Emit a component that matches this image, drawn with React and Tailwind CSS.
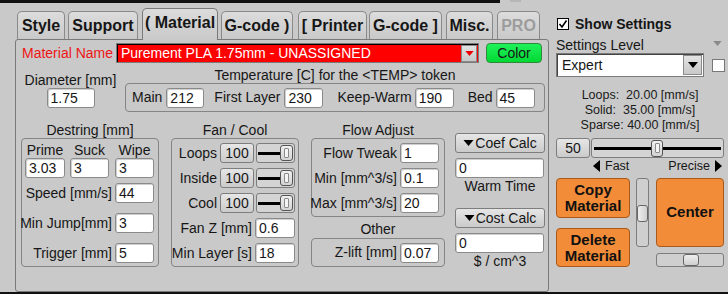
import React from "react";

const tabs = [
  { t: "Style", c: "ml-[17px] w-[48px]" },
  { t: "Support", c: "ml-[3px] w-[70px]" },
  { t: "( Material", c: "ml-[4px] w-[76px]", active: true },
  { t: "G-code )", c: "ml-[3px] w-[72px]" },
  { t: "[ Printer", c: "ml-[5px] w-[69px]" },
  { t: "G-code ]", c: "ml-[2px] w-[73px]" },
  { t: "Misc.", c: "ml-[4px] w-[47px]" },
  { t: "PRO", c: "ml-[4px] w-[43px]", off: true },
];

function Field({ v, c = "w-[39px]" }) {
  return (
    <div
      className={`${c} h-[20px] shrink-0 bg-white border border-[#8a8a8a] rounded-[3px] pl-[3px] flex items-center leading-none shadow-[inset_1px_1px_0_#cfcfcf]`}
    >
      {v}
    </div>
  );
}

function GrayBtn({ children, c }) {
  return (
    <div
      className={`${c} shrink-0 bg-linear-to-b from-[#e6e6e6] to-[#cbcbcb] border border-[#7d7d7d] rounded-[3px] flex items-center justify-center leading-none`}
    >
      {children}
    </div>
  );
}

function Thumb({ c = "w-[13px] h-[16px]" }) {
  return (
    <div className={`${c} shrink-0 border border-[#555] rounded-[3px] bg-linear-to-b from-[#f0f0f0] to-[#d4d4d4] flex items-center justify-center`}>
      <div className="w-[5px] h-[10px] border border-[#8a8a8a] rounded-[1px] bg-[#f4f4f4]" />
    </div>
  );
}

function MiniSlider() {
  return (
    <div className="w-[39px] h-[20px] shrink-0 border border-[#7d7d7d] rounded-[3px] bg-[#d4d4d4] flex items-center pl-[1px] pr-[1px]">
      <div className="flex-1 h-[3px] bg-black" />
      <Thumb />
    </div>
  );
}

function DownTri({ color = "#000", w = 11, h = 6 }) {
  return (
    <svg width={w} height={h} viewBox="0 0 10 6">
      <polygon points="0,0 10,0 5,6" fill={color} />
    </svg>
  );
}

function Row({ label, children, c = "" }) {
  return (
    <div className={`h-[20px] flex items-center justify-end ${c}`}>
      <span className="mr-[3px] whitespace-nowrap">{label}</span>
      {children}
    </div>
  );
}

export default function App() {
  return (
    <div className="w-[728px] h-[294px] bg-[#c9c9c9] flex flex-col overflow-hidden text-[14px] text-[#161616] font-['Liberation_Sans',Arial,sans-serif]">
      <div className="h-[3px] flex shrink-0">
        <div className="w-[500px] bg-[#111]" />
        <div className="ml-[10px] w-[11px] h-[2px] bg-[#b6b6b6]" />
      </div>

      <div className="flex h-[289px]">
        {/* left side: tabs + material panel */}
        <div className="w-[552px] flex flex-col">
          <div className="h-[36px] flex items-end">
            {tabs.map((tab) =>
              tab.active ? (
                <div
                  key={tab.t}
                  className={`${tab.c} h-[32px] -mb-px relative z-10 bg-linear-to-b from-[#dcdcdc] to-[#c9c9c9] border border-b-0 border-[#7a7a7a] rounded-t-[5px] flex items-center justify-center font-bold text-[16px] pb-[3px]`}
                >
                  {tab.t}
                </div>
              ) : (
                <div
                  key={tab.t}
                  className={`${tab.c} h-[28px] pt-[1px] bg-linear-to-b from-[#dcdcdc] to-[#c9c9c9] border border-b-0 border-[#8a8a8a] rounded-t-[5px] flex items-center justify-center font-bold text-[16px] ${
                    tab.off ? "text-[#9c9c9c]" : ""
                  }`}
                >
                  {tab.t}
                </div>
              )
            )}
          </div>

          <div className="ml-[15px] w-[534px] h-[253px] border border-[#7a7a7a] rounded-[3px] pl-[5px] pt-[3px]">
            {/* material name */}
            <div className="h-[20px] flex items-center">
              <span className="ml-[1px] w-[94px] text-[#ee1515]">Material Name</span>
              <div className="w-[363px] h-[20px] border border-[#7a7a7a] bg-[#ff0000] shadow-[inset_1px_1px_0_#000] flex items-center">
                <span className="flex-1 pl-[4px] text-white whitespace-nowrap">Purement PLA 1.75mm - UNASSIGNED</span>
                <div className="w-[16px] h-[17px] mr-[1px] bg-linear-to-b from-[#e2e2e2] to-[#c8c8c8] border border-[#8a8a8a] flex items-center justify-center">
                  <DownTri color="#ee0000" w={9} h={5} />
                </div>
              </div>
              <div className="ml-[7px] w-[56px] h-[20px] bg-linear-to-b from-[#1df25a] to-[#00d832] border border-[#2e8a3a] rounded-[4px] flex items-center justify-center leading-none">
                Color
              </div>
            </div>

            {/* diameter + temperature */}
            <div className="mt-[5px] flex">
              <div className="w-[99px] flex flex-col items-center pt-[4px]">
                <div className="h-[16px] leading-[16px]">Diameter [mm]</div>
                <Field v="1.75" c="w-[48px]" />
              </div>
              <div className="ml-[5px] w-[420px]">
                <div className="h-[15px] leading-[15px] text-center">Temperature [C] for the &lt;TEMP&gt; token</div>
                <div className="h-[29px] border border-[#858585] rounded-[4px] flex items-center pl-[6px]">
                  <span>Main</span>
                  <div className="ml-[4px]"><Field v="212" c="w-[38px]" /></div>
                  <span className="ml-[10px]">First Layer</span>
                  <div className="ml-[4px]"><Field v="230" /></div>
                  <span className="ml-[14px]">Keep-Warm</span>
                  <div className="ml-[3px]"><Field v="190" /></div>
                  <span className="ml-[14px]">Bed</span>
                  <div className="ml-[3px]"><Field v="45" /></div>
                </div>
              </div>
            </div>

            {/* lower groups */}
            <div className="mt-[10px] flex">
              {/* destring */}
              <div className="w-[138px]">
                <div className="h-[16px] leading-[16px] text-center">Destring [mm]</div>
                <div className="h-[129px] border border-[#858585] rounded-[4px]">
                  <div className="mt-[3px] pl-[3px] flex">
                    <div className="w-[40px] flex flex-col items-center">
                      <div className="h-[16px] leading-[16px]">Prime</div>
                      <Field v="3.03" c="w-[40px]" />
                    </div>
                    <div className="ml-[5px] w-[39px] flex flex-col items-center">
                      <div className="h-[16px] leading-[16px]">Suck</div>
                      <Field v="3" />
                    </div>
                    <div className="ml-[6px] w-[39px] flex flex-col items-center">
                      <div className="h-[16px] leading-[16px]">Wipe</div>
                      <Field v="3" />
                    </div>
                  </div>
                  <div className="pr-[4px]">
                    <Row label="Speed [mm/s]" c="mt-[5px]"><Field v="44" /></Row>
                    <Row label="Min Jump[mm]" c="mt-[10px]"><Field v="3" /></Row>
                    <Row label="Trigger [mm]" c="mt-[10px]"><Field v="5" /></Row>
                  </div>
                </div>
              </div>

              {/* fan / cool */}
              <div className="ml-[12px] w-[128px]">
                <div className="h-[16px] leading-[16px] text-center">Fan / Cool</div>
                <div className="h-[129px] border border-[#858585] rounded-[4px] pt-[4px] pr-[3px] flex flex-col gap-[5px]">
                  {["Loops", "Inside", "Cool"].map((l) => (
                    <Row key={l} label={l}>
                      <GrayBtn c="w-[34px] h-[20px]">100</GrayBtn>
                      <div className="ml-[2px]"><MiniSlider /></div>
                    </Row>
                  ))}
                  <Row label="Fan Z [mm]"><Field v="0.6" c="w-[40px]" /></Row>
                  <Row label="Min Layer [s]"><Field v="18" c="w-[40px]" /></Row>
                </div>
              </div>

              {/* flow adjust + other */}
              <div className="ml-[12px] w-[134px]">
                <div className="h-[16px] leading-[16px] text-center">Flow Adjust</div>
                <div className="h-[79px] border border-[#858585] rounded-[4px] pt-[4px] pr-[5px] flex flex-col gap-[5px]">
                  <Row label="Flow Tweak"><Field v="1" /></Row>
                  <Row label="Min [mm^3/s]"><Field v="0.1" /></Row>
                  <Row label="Max [mm^3/s]"><Field v="20" /></Row>
                </div>
                <div className="h-[21px] pt-[4px] leading-[16px] text-center">Other</div>
                <div className="h-[29px] border border-[#858585] rounded-[4px] pr-[5px] flex items-center justify-end">
                  <span className="mr-[3px]">Z-lift [mm]</span>
                  <Field v="0.07" />
                </div>
              </div>

              {/* calcs */}
              <div className="ml-[10px] w-[90px] pt-[11px] flex flex-col">
                <GrayBtn c="w-[90px] h-[20px] gap-[1px]">
                  <DownTri />
                  <span>Coef Calc</span>
                </GrayBtn>
                <div className="mt-[5px]"><Field v="0" c="w-[89px]" /></div>
                <div className="h-[16px] leading-[16px] text-center">Warm Time</div>
                <div className="mt-[14px]">
                  <GrayBtn c="w-[90px] h-[20px] gap-[1px]">
                    <DownTri />
                    <span>Cost Calc</span>
                  </GrayBtn>
                </div>
                <div className="mt-[5px]"><Field v="0" c="w-[89px]" /></div>
                <div className="h-[16px] leading-[16px] text-center">$ / cm^3</div>
              </div>
            </div>
          </div>
        </div>

        {/* right sidebar */}
        <div className="flex-1 pl-[4px] flex flex-col">
          <div className="mt-[13px] h-[16px] flex items-center">
            <div className="ml-[1px] w-[12px] h-[12px] bg-white border border-black flex items-center justify-center">
              <svg width="10" height="10" viewBox="0 0 10 10">
                <polyline points="1.5,5 4,8 8.5,1.5" fill="none" stroke="#000" strokeWidth="1.6" />
              </svg>
            </div>
            <span className="ml-[6px] font-bold">Show Settings</span>
          </div>
          <div className="mt-[5px] h-[16px] flex items-start">
            <span className="leading-[16px]">Settings Level</span>
            <div className="ml-auto mr-[5px] mt-[4px]">
              <DownTri color="#8a8a8a" w={11} h={5} />
            </div>
          </div>
          <div className="h-[24px] flex items-center">
            <div className="w-[148px] h-[24px] bg-white border border-[#7a7a7a] shadow-[inset_1px_1px_0_#444] flex items-center">
              <span className="flex-1 pl-[5px]">Expert</span>
              <div className="w-[19px] h-[20px] mr-[1px] bg-linear-to-b from-[#e4e4e4] to-[#c8c8c8] border border-[#8a8a8a] flex items-center justify-center">
                <DownTri w={10} h={6} />
              </div>
            </div>
            <div className="ml-[8px] w-[13px] h-[13px] bg-white border border-[#777]" />
          </div>
          <div className="mt-[11px] pr-[4px] text-[12.5px] leading-[15px] text-center text-[#1a1a1a]">
            <div className="whitespace-pre">Loops:  20.00 [mm/s]</div>
            <div className="whitespace-pre">Solid:  35.00 [mm/s]</div>
            <div className="whitespace-pre">Sparse: 40.00 [mm/s]</div>
          </div>
          <div className="mt-[5px] h-[20px] flex">
            <GrayBtn c="w-[34px] h-[20px]">50</GrayBtn>
            <div className="ml-[1px] w-[133px] h-[20px] border border-[#7d7d7d] rounded-[3px] bg-[#d4d4d4] flex items-center px-[2px]">
              <div className="w-[57px] h-[3px] bg-black" />
              <Thumb c="w-[12px] h-[17px]" />
              <div className="flex-1 h-[3px] bg-black" />
            </div>
          </div>
          <div className="h-[16px] w-[168px] pl-[37px] pr-[2px] flex items-center justify-between text-[12.5px]">
            <div className="flex items-center">
              <svg width="7" height="12" viewBox="0 0 7 12"><polygon points="7,0 7,12 0,6" fill="#000" /></svg>
              <span className="ml-[5px]">Fast</span>
            </div>
            <div className="flex items-center">
              <span className="mr-[5px]">Precise</span>
              <svg width="7" height="12" viewBox="0 0 7 12"><polygon points="0,0 0,12 7,6" fill="#000" /></svg>
            </div>
          </div>
          <div className="mt-[4px] flex">
            <div className="w-[74px] flex flex-col">
              <div className="h-[40px] bg-[#f28c38] border border-[#a85a1c] rounded-[4px] flex flex-col items-center justify-center font-bold text-[15px] leading-[16px] text-[#111]">
                <span>Copy</span>
                <span>Material</span>
              </div>
              <div className="mt-[10px] h-[39px] bg-[#f28c38] border border-[#a85a1c] rounded-[4px] flex flex-col items-center justify-center font-bold text-[15px] leading-[16px] text-[#111]">
                <span>Delete</span>
                <span>Material</span>
              </div>
            </div>
            <div className="ml-[6px] w-[13px] h-[69px] border border-[#7d7d7d] rounded-[3px] bg-[#cfcfcf] flex items-center justify-center pt-[2px]">
              <div className="w-[11px] h-[17px] border border-[#666] rounded-[3px] bg-linear-to-r from-[#eeeeee] to-[#cfcfcf]" />
            </div>
            <div className="ml-[7px] w-[68px] flex flex-col">
              <div className="h-[69px] bg-[#f28c38] border border-[#a85a1c] rounded-[4px] flex items-center justify-center font-bold text-[15px] text-[#111]">
                Center
              </div>
              <div className="mt-[6px] h-[14px] border border-[#7d7d7d] rounded-[3px] bg-[#cfcfcf] flex items-center justify-center pl-[2px]">
                <div className="w-[16px] h-[12px] border border-[#666] rounded-[3px] bg-linear-to-b from-[#eeeeee] to-[#cfcfcf]" />
              </div>
            </div>
          </div>
        </div>
      </div>

      <div className="h-[2px] bg-[#111] shrink-0" />
    </div>
  );
}
